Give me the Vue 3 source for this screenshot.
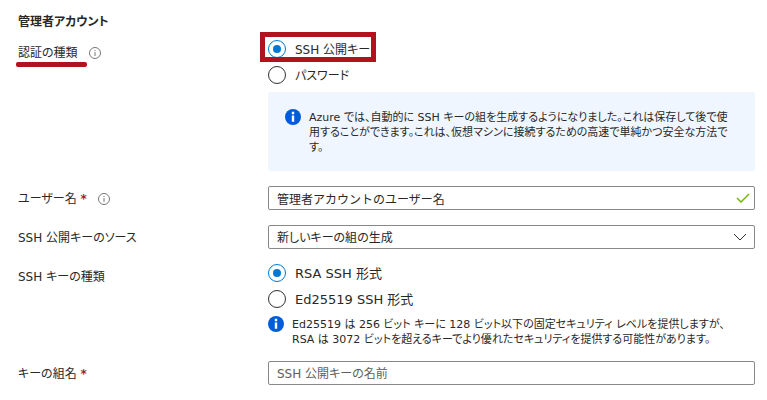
<template>
  <form class="page" @submit.prevent>
    <h2 class="title">管理者アカウント</h2>

    <div class="row">
      <div class="label">
        <span id="auth-label" class="marked">認証の種類</span>
        <svg class="hint" viewBox="0 0 12 12">
          <circle cx="6" cy="6" r="5.5" />
          <path d="M6 5v4M6 3v1" />
        </svg>
      </div>
      <div class="field" role="radiogroup" aria-labelledby="auth-label">
        <label v-for="o in authTypes" :key="o.value" class="radio" :class="{ boxed: o.boxed }">
          <input v-model="form.auth" type="radio" name="auth" :value="o.value" />
          <span>{{ o.text }}</span>
        </label>
        <div class="notice">
          <svg class="info" viewBox="0 0 16 16">
            <circle cx="8" cy="8" r="8" />
            <path d="M6.8 2.8h2.4v2.4H6.8zM6.8 6.6h2.4v6.2H6.8z" />
          </svg>
          <p>
            Azure では、自動的に SSH キーの組を生成するようになりました。これは保存して後で使<br />用することができます。これは、仮想マシンに接続するための高速で単純かつ安全な方法で<br />す。
          </p>
        </div>
      </div>
    </div>

    <div class="row">
      <div class="label">
        <label for="user">ユーザー名 <span class="required">*</span></label>
        <svg class="hint" viewBox="0 0 12 12">
          <circle cx="6" cy="6" r="5.5" />
          <path d="M6 5v4M6 3v1" />
        </svg>
      </div>
      <div class="control">
        <input id="user" v-model="form.user" class="box wide" type="text" />
        <svg class="mark check" viewBox="0 0 14 10">
          <path d="M1 5l4 4 8-8" />
        </svg>
      </div>
    </div>

    <div class="row">
      <div class="label">
        <label for="source">SSH 公開キーのソース</label>
      </div>
      <div class="control">
        <select id="source" v-model="form.source" class="box">
          <option value="new">新しいキーの組の生成</option>
        </select>
        <svg class="mark arrow" viewBox="0 0 14 8">
          <path d="M1 1l6 6 6-6" />
        </svg>
      </div>
    </div>

    <div class="row">
      <div id="type-label" class="label">SSH キーの種類</div>
      <div class="field formats" role="radiogroup" aria-labelledby="type-label">
        <label v-for="o in keyTypes" :key="o.value" class="radio">
          <input v-model="form.keyType" type="radio" name="keyType" :value="o.value" />
          <span>{{ o.text }}</span>
        </label>
        <div class="note">
          <svg class="info" viewBox="0 0 16 16">
            <circle cx="8" cy="8" r="8" />
            <path d="M6.8 2.8h2.4v2.4H6.8zM6.8 6.6h2.4v6.2H6.8z" />
          </svg>
          <p>
            Ed25519 は 256 ビット キーに 128 ビット以下の固定セキュリティ レベルを提供しますが、<br />RSA は 3072 ビットを超えるキーでより優れたセキュリティを提供する可能性があります。
          </p>
        </div>
      </div>
    </div>

    <div class="row">
      <div class="label">
        <label for="keyname">キーの組名 <span class="required">*</span></label>
      </div>
      <div class="control">
        <input id="keyname" v-model="form.keyName" class="box" type="text" placeholder="SSH 公開キーの名前" />
      </div>
    </div>
  </form>
</template>

<script setup>
import { ref } from "vue"

const authTypes = [
  { value: "ssh", text: "SSH 公開キー", boxed: true },
  { value: "password", text: "パスワード" },
]

const keyTypes = [
  { value: "rsa", text: "RSA SSH 形式" },
  { value: "ed25519", text: "Ed25519 SSH 形式" },
]

const form = ref({
  auth: "ssh",
  user: "管理者アカウントのユーザー名",
  source: "new",
  keyType: "rsa",
  keyName: "",
})
</script>

<style>
body {
  background: #fff;
}
</style>

<style scoped>
.page {
  display: flex;
  flex-direction: column;
  gap: 15px;
  padding: 13px 12px 15px 18px;
  font-family: "DejaVu Sans", "Noto Sans CJK JP", sans-serif;
  font-feature-settings: "palt";
  font-size: 12px;
  line-height: 18px;
  color: #292827;
}
.title {
  margin: 0 0 -6px;
  font-size: 12px;
  line-height: 18px;
  font-weight: bold;
}
.row {
  display: grid;
  grid-template-columns: 250px minmax(0, 1fr);
}
.label {
  box-sizing: border-box;
  display: flex;
  align-items: center;
  gap: 11px;
  height: 24px;
  padding-top: 2px;
}
.field {
  display: flex;
  flex-direction: column;
  gap: 8px;
}
.formats {
  font-size: 13px;
}
.marked {
  position: relative;
}
.marked::after {
  content: "";
  position: absolute;
  left: -2px;
  right: -9px;
  bottom: -5px;
  height: 5px;
  border-radius: 2px;
  background: #b1121d;
}
.hint {
  width: 12px;
  height: 12px;
  fill: none;
  stroke: #797775;
}
.required {
  color: #a4262c;
  font-weight: bold;
}
.radio {
  position: relative;
  display: flex;
  align-items: center;
  gap: 9px;
  align-self: flex-start;
  height: 18px;
}
.radio span {
  padding-top: 2px;
}
.radio input {
  appearance: none;
  display: grid;
  place-items: center;
  width: 18px;
  height: 18px;
  margin: 0;
  border: 1px solid #323130;
  border-radius: 50%;
  background: #fff;
}
.radio input:checked {
  border-color: #0078d4;
}
.radio input:checked::after {
  content: "";
  width: 8px;
  height: 8px;
  border-radius: 50%;
  background: #0078d4;
}
.boxed::after {
  content: "";
  position: absolute;
  left: -8px;
  right: -6px;
  top: -8px;
  bottom: -4px;
  border: 5px solid #b1121d;
  pointer-events: none;
}
.notice {
  display: flex;
  gap: 8px;
  padding: 17px 17px 16px;
  border-radius: 3px;
  background: #f0f6ff;
}
.note {
  display: flex;
  gap: 8px;
}
.notice p,
.note p {
  margin: 0;
  padding-top: 1px;
  font-size: 11px;
  line-height: 15px;
  white-space: nowrap;
}
.info {
  flex: none;
  width: 16px;
  height: 16px;
  fill: #015cda;
}
.info path {
  fill: #fff;
}
.note {
  margin-bottom: -1px;
}
.control {
  position: relative;
}
.box {
  appearance: none;
  box-sizing: border-box;
  display: block;
  width: 100%;
  height: 24px;
  padding: 1px 32px 0 8px;
  border: 1px solid #8a8886;
  border-radius: 2px;
  background: #fff;
  color: #292827;
  font: inherit;
  font-feature-settings: inherit;
}
.wide {
  font-feature-settings: normal;
}
.box::placeholder {
  color: #605e5c;
}
.mark {
  position: absolute;
  fill: none;
  pointer-events: none;
}
.check {
  right: 5px;
  top: 7px;
  width: 14px;
  height: 10px;
  stroke: #6bb700;
  stroke-width: 1.4;
}
.arrow {
  right: 8px;
  top: 8px;
  width: 14px;
  height: 8px;
  stroke: #323130;
}
</style>
